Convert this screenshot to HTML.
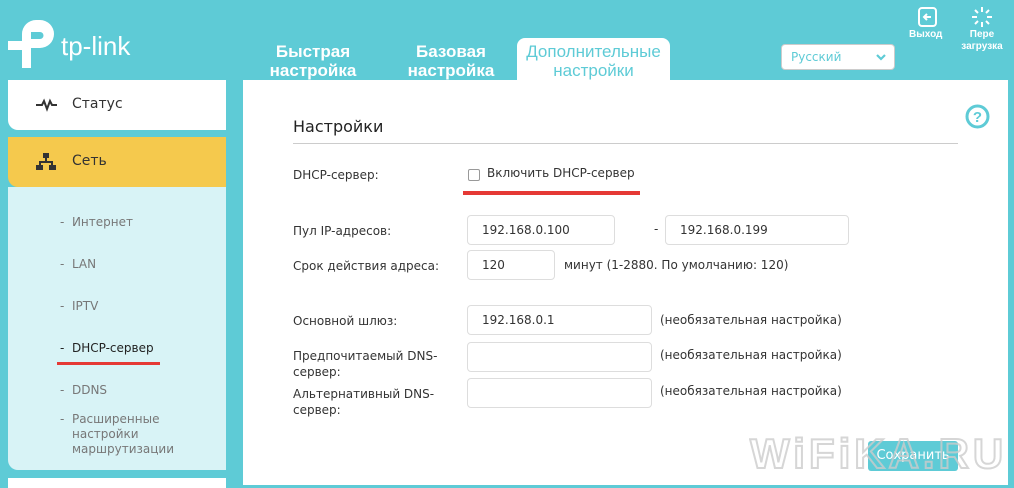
<!DOCTYPE html>
<html><head><meta charset="utf-8"><style>
*{margin:0;padding:0;box-sizing:border-box}
body{width:1014px;height:485px;overflow:hidden;background:#5ecbd6;font-family:"DejaVu Sans","Liberation Sans",sans-serif;position:relative;color:#333}
.a{position:absolute}
.tab{position:absolute;color:#fff;font-size:16px;line-height:19px;text-align:center;font-weight:bold;font-family:"Liberation Sans",sans-serif;font-size:17px}
.lbl{position:absolute;left:293px;font-size:12px;color:#333;line-height:16px}
.in{position:absolute;left:467px;height:30px;border:1px solid #ddd;border-radius:4px;background:#fff;font-size:12px;line-height:28px;padding-left:14px;color:#333}
.opt{position:absolute;left:660px;font-size:12px;color:#333}
.sub{position:absolute;left:60px;font-size:12px;color:#777;line-height:15px}
</style></head><body>
<!-- logo -->
<svg class="a" style="left:8px;top:18px" width="50" height="52" viewBox="0 0 50 52">
<path d="M14 50 V32 H0 V23 H14 V16 A14 14 0 0 1 28 2 H32 A14 14 0 0 1 32 30 H23 V50 Z M23 14 V21 H32 A3.5 3.5 0 0 0 32 14 Z" fill="#fff"/>
</svg>
<div class="a" style="left:61px;top:31px;color:#fff;font-size:26px;font-family:'Liberation Sans',sans-serif">tp-link</div>
<!-- tabs -->
<div class="tab" style="left:263px;top:42px;width:100px">Быстрая<br>настройка</div>
<div class="tab" style="left:401px;top:42px;width:100px">Базовая<br>настройка</div>
<div class="a" style="left:517px;top:38px;width:153px;height:44px;background:#fff;border-radius:8px 8px 0 0"></div>
<div class="tab" style="left:517px;top:42px;width:153px;color:#5ecbd6;font-weight:normal">Дополнительные<br>настройки</div>
<!-- language -->
<div class="a" style="left:781px;top:44px;width:114px;height:26px;background:#fff;border:1px solid #ccc;border-radius:4px;font-size:12px;color:#5ecbd6;line-height:24px;padding-left:9px">Русский</div>
<svg class="a" style="left:875px;top:53px" width="12" height="8"><path d="M2 2 L6 6 L10 2" stroke="#5ecbd6" stroke-width="2.2" fill="none"/></svg>
<!-- exit/reboot -->
<svg class="a" style="left:917px;top:6px" width="22" height="22"><rect x="2" y="2" width="17" height="18" rx="3" stroke="#fff" stroke-width="2" fill="none"/><path d="M14 11 H7 M10 8 L7 11 L10 14" stroke="#fff" stroke-width="2" fill="none"/></svg>
<div class="a" style="left:909px;top:29px;color:#fff;font-size:10px;font-weight:bold;font-family:'Liberation Sans',sans-serif">Выход</div>
<svg class="a" style="left:971px;top:6px" width="22" height="22" stroke="#fff" stroke-width="2"><path d="M11 1V6M11 16V21M1 11H6M16 11H21M4 4L7 7M15 15L18 18M18 4L15 7M7 15L4 18"/></svg>
<div class="a" style="left:958px;top:29px;width:48px;color:#fff;font-size:10px;text-align:center;line-height:12px;font-weight:bold;font-family:'Liberation Sans',sans-serif">Пере<br>загрузка</div>
<!-- sidebar -->
<div class="a" style="left:8px;top:80px;width:218px;height:50px;background:#fff;border-radius:0 0 0 10px"></div>
<svg class="a" style="left:36px;top:98px" width="22" height="14"><path d="M0 7 H6 L8 3 L11 11 L14 3 L16 7 H21" stroke="#333" stroke-width="2" fill="none"/></svg>
<div class="a" style="left:72px;top:96px;font-size:14px;color:#333">Статус</div>
<div class="a" style="left:8px;top:137px;width:218px;height:50px;background:#f5c94d;border-radius:0 0 0 10px"></div>
<svg class="a" style="left:36px;top:153px" width="20" height="18" fill="#333"><rect x="7" y="0" width="6" height="5"/><rect x="9" y="5" width="2" height="4"/><rect x="3" y="8" width="14" height="2"/><rect x="3" y="9" width="2" height="4"/><rect x="15" y="9" width="2" height="4"/><rect x="0" y="12" width="7" height="5"/><rect x="13" y="12" width="7" height="5"/></svg>
<div class="a" style="left:72px;top:153px;font-size:14px;color:#333">Сеть</div>
<div class="a" style="left:8px;top:187px;width:218px;height:283px;background:#d8f3f6;border-radius:0 0 0 10px"></div>
<div class="a" style="left:8px;top:478px;width:218px;height:10px;background:#fff"></div>
<div class="sub" style="top:215px">- &nbsp;Интернет</div>
<div class="sub" style="top:257px">- &nbsp;LAN</div>
<div class="sub" style="top:299px">- &nbsp;IPTV</div>
<div class="sub" style="top:341px;color:#222">- &nbsp;DHCP-сервер</div>
<div class="a" style="left:57px;top:362px;width:103px;height:3px;background:#e53935"></div>
<div class="sub" style="top:383px">- &nbsp;DDNS</div>
<div class="sub" style="top:412px">- &nbsp;Расширенные</div>
<div class="sub" style="top:427px;left:72px">настройки</div>
<div class="sub" style="top:442px;left:72px">маршрутизации</div>
<!-- main -->
<div class="a" style="left:243px;top:80px;width:765px;height:405px;background:#fff"></div>
<svg class="a" style="left:965px;top:104px" width="25" height="25"><circle cx="12.5" cy="12.5" r="10.5" stroke="#5ecbd6" stroke-width="3" fill="none"/><text x="12.5" y="18" text-anchor="middle" font-family="Liberation Sans" font-weight="bold" font-size="15" fill="#5ecbd6">?</text></svg>
<div class="a" style="left:293px;top:117px;font-size:16px;color:#222">Настройки</div>
<div class="a" style="left:293px;top:143px;width:665px;height:1px;background:#ccc"></div>
<div class="lbl" style="top:167px">DHCP-сервер:</div>
<div class="a" style="left:468px;top:169px;width:12px;height:12px;border:1px solid #999;border-radius:2px"></div>
<div class="a" style="left:487px;top:166px;font-size:12px;color:#333">Включить DHCP-сервер</div>
<div class="a" style="left:463px;top:191px;width:177px;height:4px;background:#e53935"></div>
<div class="lbl" style="top:223px">Пул IP-адресов:</div>
<div class="in" style="top:215px;width:148px">192.168.0.100</div>
<div class="a" style="left:654px;top:222px;font-size:12px">-</div>
<div class="in" style="left:665px;top:215px;width:184px">192.168.0.199</div>
<div class="lbl" style="top:258px">Срок действия адреса:</div>
<div class="in" style="top:250px;width:88px">120</div>
<div class="a" style="left:564px;top:258px;font-size:12px">минут (1-2880. По умолчанию: 120)</div>
<div class="lbl" style="top:313px">Основной шлюз:</div>
<div class="in" style="top:305px;width:185px">192.168.0.1</div>
<div class="opt" style="top:313px">(необязательная настройка)</div>
<div class="lbl" style="top:348px">Предпочитаемый DNS-<br>сервер:</div>
<div class="in" style="top:342px;width:185px"></div>
<div class="opt" style="top:348px">(необязательная настройка)</div>
<div class="lbl" style="top:386px">Альтернативный DNS-<br>сервер:</div>
<div class="in" style="top:378px;width:185px"></div>
<div class="opt" style="top:384px">(необязательная настройка)</div>
<!-- save + watermark -->
<div class="a" style="left:868px;top:441px;width:90px;height:30px;background:#5ecbd6;border-radius:3px;color:#fff;font-size:13px;line-height:30px;text-align:center">Сохранить</div>
<div class="a" style="left:750px;top:430px;font-size:42px;font-weight:bold;font-family:'Liberation Sans',sans-serif;color:transparent;-webkit-text-stroke:2px #ccc;letter-spacing:4px;opacity:.8">WiFiKA.RU</div>
</body></html>
